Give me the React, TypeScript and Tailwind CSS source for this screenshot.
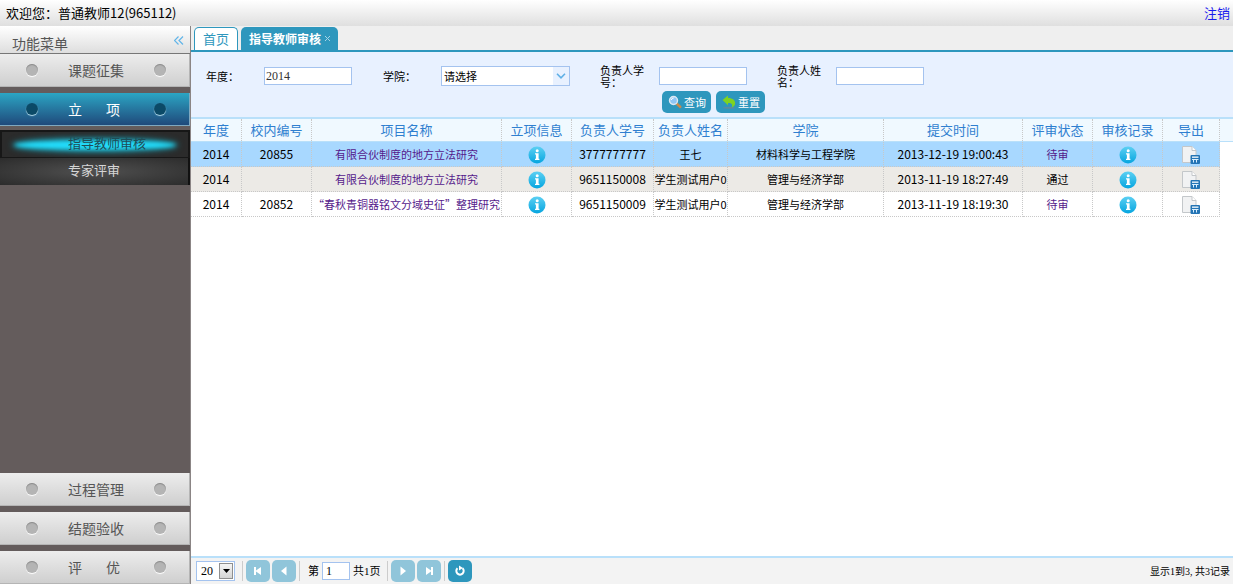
import type { ReactNode } from 'react'

interface Project {
  year: string
  code: string
  name: string
  studentNo: string
  studentName: string
  college: string
  submittedAt: string
  status: string
}

const projects: Project[] = [
  {
    year: '2014',
    code: '20855',
    name: '有限合伙制度的地方立法研究',
    studentNo: '3777777777',
    studentName: '王七',
    college: '材料科学与工程学院',
    submittedAt: '2013-12-19 19:00:43',
    status: '待审',
  },
  {
    year: '2014',
    code: '',
    name: '有限合伙制度的地方立法研究',
    studentNo: '9651150008',
    studentName: '学生测试用户0',
    college: '管理与经济学部',
    submittedAt: '2013-11-19 18:27:49',
    status: '通过',
  },
  {
    year: '2014',
    code: '20852',
    name: '“春秋青铜器铭文分域史征”整理研究',
    studentNo: '9651150009',
    studentName: '学生测试用户0',
    college: '管理与经济学部',
    submittedAt: '2013-11-19 18:19:30',
    status: '待审',
  },
]

const columns = [
  { title: '年度', width: 'w-[51px]' },
  { title: '校内编号', width: 'w-[70px]' },
  { title: '项目名称', width: 'w-[190px]' },
  { title: '立项信息', width: 'w-[70px]' },
  { title: '负责人学号', width: 'w-[82px]' },
  { title: '负责人姓名', width: 'w-[74px]' },
  { title: '学院', width: 'w-[156px]' },
  { title: '提交时间', width: 'w-[139px]' },
  { title: '评审状态', width: 'w-[70px]' },
  { title: '审核记录', width: 'w-[70px]' },
  { title: '导出', width: 'w-[57px]' },
]

const rowColors = ['bg-[#a8d8ff]', 'bg-[#eceae6]', 'bg-white']

function InfoIcon() {
  return (
    <svg width="18" height="18" viewBox="0 0 18 18" aria-hidden="true">
      <defs>
        <linearGradient id="info-fill" x1="0" y1="0" x2="0" y2="1">
          <stop offset="0" stopColor="#5cd0f3" />
          <stop offset="1" stopColor="#06a5df" />
        </linearGradient>
      </defs>
      <circle cx="9" cy="9" r="8.5" fill="url(#info-fill)" />
      <circle cx="9.2" cy="4.8" r="1.5" fill="#fff" />
      <path d="M7 7.2h3.6v5.6h.8v1.2H7v-1.2h.9V8.400H7z" fill="#fff" />
    </svg>
  )
}

function ExportIcon() {
  return (
    <svg width="18" height="18" viewBox="0 0 18 18" aria-hidden="true">
      <path d="M.5.5h9.500l4 4v12H.5z" fill="#f1f2f3" stroke="#c3c7ca" />
      <path d="M10 .5v4h4" fill="#fff" stroke="#c3c7ca" />
      <rect x="8.500" y="9" width="9.500" height="9" rx="1" fill="#2374b5" />
      <rect x="10" y="10.500" width="6.500" height="1.300" fill="#fff" />
      <path d="M10 13.500h6.500M11.500 14v2.500M14.500 14v2.500" stroke="#d9efff" fill="none" />
    </svg>
  )
}

function SearchIcon() {
  return (
    <svg width="14" height="14" viewBox="0 0 14 14" aria-hidden="true">
      <path d="M8.500 8.500l3.800 3.500" stroke="#c98a4c" strokeWidth="2.400" strokeLinecap="round" />
      <circle cx="5.500" cy="5.500" r="4" fill="#8fc6f5" stroke="#dbe8f3" strokeWidth="1.400" />
      <path d="M3.300 5a2.400 2.400 0 0 1 2.400-2" stroke="#fff" fill="none" />
    </svg>
  )
}

function UndoIcon() {
  return (
    <svg width="14" height="14" viewBox="0 0 14 14" aria-hidden="true">
      <ellipse cx="7" cy="12.800" rx="6" ry="1" fill="#5c8ba0" />
      <path d="M.5 5L6 .5v2.500c4.800 0 7.500 2.300 7.100 5.800-.2 1.700-1.500 3.100-3.400 3.600 1.300-2.600.2-4.500-3.700-4.400v2.200z" fill="#7fd320" />
    </svg>
  )
}

function Dot({ active }: { active?: boolean }) {
  return (
    <span
      className={
        active
          ? 'size-3 rounded-full bg-[#0b4a67] shadow-[0_1px_1px_#b5dcec]'
          : 'size-3 rounded-full bg-[#b4b4b4] shadow-[inset_0_1px_1px_#8a8a8a,0_1px_1px_#ffffff]'
      }
    />
  )
}

function MenuButton({ children, active }: { children: ReactNode; active?: boolean }) {
  const look = active
    ? 'from-[#2ba6c4] to-[#1f4a7b] text-white border-[#7fa9c0]'
    : 'from-[#ededed] to-[#cfcfcf] text-[#555] border-[#b5b5b5]'
  return (
    <button
      type="button"
      className={`flex h-[33px] w-full shrink-0 items-center border-r border-b bg-linear-to-b pr-[23px] pl-[26px] text-left text-sm ${look}`}
    >
      <Dot active={active} />
      <span className="flex-1 pl-[30px] whitespace-pre">{children}</span>
      <Dot active={active} />
    </button>
  )
}

// two-character titles are spread over the width of a four-character one
function Spread({ first, last }: { first: string; last: string }) {
  return (
    <span className="flex gap-6">
      <span>{first}</span>
      <span>{last}</span>
    </span>
  )
}

function Sidebar() {
  return (
    <aside className="flex w-[191px] shrink-0 flex-col border-r border-[#8b8585] bg-[#645c5c]">
      <div className="flex h-7 shrink-0 items-start justify-between border-b border-[#777] bg-linear-to-b from-white to-[#dedede] pr-1.5 pl-3">
        <h2 className="pt-2 text-sm leading-[18px] text-[#555]">功能菜单</h2>
        <button type="button" aria-label="收起菜单" className="pt-2.5 text-[#62b5e8]">
          <svg width="10" height="9" viewBox="0 0 10 9" fill="none" stroke="currentColor" strokeWidth="1.200">
            <path d="M4.500.5l-4 4 4 4M9 .5l-4 4 4 4" />
          </svg>
        </button>
      </div>
      <nav className="flex flex-1 flex-col gap-1.5">
        <MenuButton>课题征集</MenuButton>
        <div>
          <MenuButton active><Spread first="立" last="项" /></MenuButton>
          <div className="mt-1 text-[13px]">
            <a
              href="#review"
              className="relative flex h-7 items-center border-2 border-b border-[#171717] bg-[#2b2b2b] pb-[3px] pl-[66px] text-[#1f4d57]"
            >
              <span className="absolute inset-x-3 top-2 h-2.5 rounded-[50%] bg-[#22dcfb] shadow-[0_0_5px_2px_#1795a8] blur-[2px]" />
              <span className="relative">指导教师审核</span>
            </a>
            <a
              href="#expert"
              className="flex h-[27px] items-center border-r-2 border-[#111] bg-radial from-[#505050] to-[#2c2c2c] pb-[3px] pl-[68px] text-[#d5d5d5]"
            >
              专家评审
            </a>
          </div>
        </div>
        <div className="mt-auto flex flex-col gap-1.5">
          <MenuButton>过程管理</MenuButton>
          <MenuButton>结题验收</MenuButton>
          <MenuButton><Spread first="评" last="优" /></MenuButton>
        </div>
      </nav>
    </aside>
  )
}

function Tabs() {
  return (
    <div className="flex h-[26px] shrink-0 items-end gap-[3px] border-b-2 border-[#2e97bd] bg-[#efefef] pl-[3px]">
      <button
        type="button"
        className="h-[23px] rounded-t-[5px] border border-b-0 border-[#2e97bd] bg-white px-2 text-[13px] leading-5 text-[#2e97bd]"
      >
        首页
      </button>
      <button
        type="button"
        className="flex h-[23px] items-center gap-1 rounded-t-[5px] bg-[#2e97bd] px-2 text-xs font-bold text-white"
      >
        指导教师审核
        <svg width="5" height="5" viewBox="0 0 5 5" stroke="#a5d3e5" aria-hidden="true">
          <path d="M0 0l5 5M5 0L0 5" />
        </svg>
      </button>
    </div>
  )
}

const inputClass =
  "h-[18px] w-[88px] border border-[#a4c3ef] bg-white px-px font-['Liberation_Serif','Noto_Sans_CJK_SC',serif] text-xs text-[#333]"

const formButtonClass = 'flex h-[22px] items-center gap-0.5 rounded-[5px] bg-[#2e97bd] pr-[5px] pl-1.5'

function SearchForm() {
  return (
    <form className="grid shrink-0 grid-cols-[58px_119px_58px_159px_59px_118px_59px_88px] items-center gap-y-[3px] bg-[#e8f1ff] pt-3 pb-1 pl-[15px] text-[11px] leading-3">
      <label htmlFor="year">年度：</label>
      <input id="year" defaultValue="2014" className={inputClass} />
      <label htmlFor="college">学院：</label>
      <span className="relative flex w-[129px]">
        <select id="college" className="h-5 w-full appearance-none border border-[#a4c3ef] bg-white px-0.5 text-[11px]">
          <option>请选择</option>
        </select>
        <span className="pointer-events-none absolute top-px right-px flex h-[18px] w-4 items-center justify-center bg-[#e8f1ff]">
          <svg width="10" height="6" viewBox="0 0 10 6" fill="none" stroke="#5fb0e6" strokeWidth="1.600">
            <path d="M1 .8l4 4 4-4" />
          </svg>
        </span>
      </span>
      <label htmlFor="student-no" className="w-11">负责人学号：</label>
      <input id="student-no" className={inputClass} />
      <label htmlFor="student-name" className="w-11">负责人姓名：</label>
      <input id="student-name" className={inputClass} />
      <div className="col-span-3 col-start-6 flex gap-[5px] pl-[3px] text-white">
        <button type="button" className={formButtonClass}>
          <SearchIcon />
          查询
        </button>
        <button type="reset" className={formButtonClass}>
          <UndoIcon />
          重置
        </button>
      </div>
    </form>
  )
}

function Cell({ children }: { children?: ReactNode }) {
  return (
    <td className="h-[25px] border-r border-b border-dotted border-[#c8c8c8] p-0 whitespace-nowrap">
      {children}
    </td>
  )
}

function ProjectTable() {
  return (
    <table className="w-full table-fixed border-separate border-spacing-0 text-center text-[11px] leading-4">
      <thead>
        <tr className="bg-[#f0f9ff] text-[13px] text-[#2f7fd0]">
          {columns.map((col) => (
            <th
              key={col.title}
              className={`${col.width} h-[25px] border-t-2 border-b border-[#b9e0fa] p-0 font-normal whitespace-nowrap`}
            >
              <div className="border-r border-dotted border-[#c8c8c8] leading-[22px]">{col.title}</div>
            </th>
          ))}
          <td className="border-t-2 border-b border-[#b9e0fa]" />
        </tr>
      </thead>
      <tbody>
        {projects.map((p, i) => (
          <tr key={p.studentNo} className={rowColors[i]}>
            <Cell><span className="text-xs">{p.year}</span></Cell>
            <Cell><span className="text-xs">{p.code}</span></Cell>
            <Cell>
              <a href="#project" className="text-[#551a8b]">{p.name}</a>
            </Cell>
            <Cell>
              <button type="button" aria-label="立项信息" className="align-middle"><InfoIcon /></button>
            </Cell>
            <Cell><span className="text-xs">{p.studentNo}</span></Cell>
            <Cell>{p.studentName}</Cell>
            <Cell>{p.college}</Cell>
            <Cell><span className="text-xs">{p.submittedAt}</span></Cell>
            <Cell>
              {p.status === '待审' ? <a href="#status" className="text-[#551a8b]">{p.status}</a> : p.status}
            </Cell>
            <Cell>
              <button type="button" aria-label="审核记录" className="align-middle"><InfoIcon /></button>
            </Cell>
            <Cell>
              <button type="button" aria-label="导出" className="align-middle"><ExportIcon /></button>
            </Cell>
          </tr>
        ))}
      </tbody>
    </table>
  )
}

function PageButton({ label, path }: { label: string; path: string }) {
  return (
    <button type="button" aria-label={label} className="flex h-[22px] w-6 items-center justify-center rounded-[5px] bg-[#90c5da]">
      <svg width="12" height="12" viewBox="0 0 12 12" fill="#fff">
        <path d={path} />
      </svg>
    </button>
  )
}

function Divider() {
  return <span className="h-5 w-px bg-[#ccc]" />
}

function Pager() {
  return (
    <footer className="flex h-7 shrink-0 items-center border-t-2 border-[#b9e0fa] bg-[#f3f3f3] pr-[3px] pl-[5px] font-['Liberation_Serif','Noto_Sans_CJK_SC',serif] text-[11px]">
      <span className="relative flex">
        <select
          aria-label="每页条数"
          className="h-5 w-[39px] appearance-none border border-[#a4c3ef] bg-white pl-1 text-xs"
        >
          <option>20</option>
        </select>
        <span className="pointer-events-none absolute top-0.5 right-0.5 flex h-4 w-[14px] items-center justify-center border border-[#8f8f8f] bg-linear-to-b from-[#f5f5f5] to-[#d5d5d5]">
          <svg width="7" height="4" viewBox="0 0 7 4">
            <path d="M0 0h7L3.500 4z" />
          </svg>
        </span>
      </span>
      <div className="ml-[7px] flex items-center gap-[3px]">
        <Divider />
        <div className="flex gap-0.5">
          <PageButton label="首页" path="M2 2h2v3.500L9 2v8L4 6.500V10H2z" />
          <PageButton label="上一页" path="M8.500 1.500v9L3 6z" />
        </div>
        <Divider />
      </div>
      <label htmlFor="page" className="ml-2">第</label>
      <input
        id="page"
        defaultValue="1"
        className="ml-[3px] h-[18px] w-7 border border-[#a4c3ef] bg-white px-[3px] text-xs"
      />
      <span className="ml-[3px]">共1页</span>
      <div className="ml-1.5 flex items-center gap-[3px]">
        <Divider />
        <div className="flex gap-0.5">
          <PageButton label="下一页" path="M3.500 1.500v9L9 6z" />
          <PageButton label="末页" path="M10 2H8v3.500L3 2v8l5-3.500V10h2z" />
        </div>
        <Divider />
        <button type="button" aria-label="刷新" className="flex h-[22px] w-6 items-center justify-center rounded-[5px] bg-[#2e97bd]">
          <svg width="12" height="12" viewBox="0 0 12 12">
            <path d="M3.500 3.200a3.700 3.700 0 1 0 5 0" fill="none" stroke="#fff" strokeWidth="2" />
            <path d="M5 .5l4 2.500-4 2.500z" fill="#fff" />
          </svg>
        </button>
      </div>
      <span className="ml-auto text-[10px]">显示1到3, 共3记录</span>
    </footer>
  )
}

export default function App() {
  return (
    <div className="flex h-screen flex-col overflow-hidden bg-white font-['Noto_Sans_CJK_SC',sans-serif] text-black">
      <header className="flex h-[26px] shrink-0 items-center justify-between bg-linear-to-b from-white to-[#dfdfdf] pr-[3px] pl-1.5 text-[13px]">
        <span>欢迎您：普通教师12(965112)</span>
        <a href="#logout" className="text-[#1a1aee]">注销</a>
      </header>
      <div className="flex min-h-0 flex-1">
        <Sidebar />
        <main className="flex min-w-0 flex-1 flex-col">
          <Tabs />
          <SearchForm />
          <div className="min-h-0 flex-1 overflow-hidden">
            <ProjectTable />
          </div>
          <Pager />
        </main>
      </div>
    </div>
  )
}
